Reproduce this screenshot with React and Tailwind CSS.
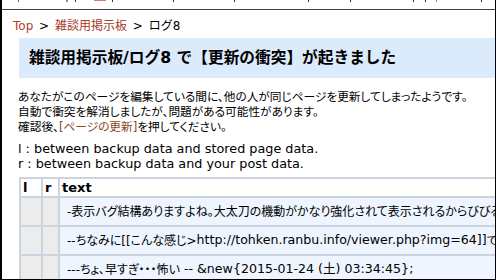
import React from 'react';

function TopMarks() {
  return (
    <div className="h-[10px] border-b border-[#404040] flex items-start overflow-hidden">
      <span className="ml-[16px] w-px h-[2px] bg-[#3a6ea5]" />
      <span className="ml-[47px] w-[2px] h-[2px] bg-[#5b9bd5]" />
      <span className="ml-[7px] w-px h-[2px] bg-[#333]" />
      <span className="ml-[18px] w-[12px] h-px bg-[#d08070]" />
      <span className="ml-[6px] w-px h-[2px] bg-[#333]" />
      <span className="ml-[60px] w-px h-[2px] bg-[#333]" />
      <span className="ml-[60px] w-px h-[2px] bg-[#333]" />
      <span className="ml-[73px] w-px h-[2px] bg-[#333]" />
      <span className="ml-[41px] w-px h-[2px] bg-[#333]" />
      <span className="ml-[62px] w-px h-[2px] bg-[#333]" />
      <span className="ml-[11px] w-px h-[2px] bg-[#333]" />
      <span className="ml-[10px] w-px h-[2px] bg-[#5b9bd5]" />
      <span className="ml-[44px] w-px h-[2px] bg-[#333]" />
    </div>
  );
}

function Row({ children }) {
  return (
    <>
      <div className="h-[27px] bg-[#ececec]" />
      <div className="h-[27px] bg-[#ececec]" />
      <div className="h-[27px] bg-[#eef5ff] pl-[7px] flex items-center text-[12px] whitespace-nowrap [font-feature-settings:'palt']">
        {children}
      </div>
    </>
  );
}

export default function App() {
  return (
    <div
      className="w-[496px] h-[280px] overflow-hidden bg-white border-l-2 border-r border-b border-black text-black"
      style={{ fontFamily: '"DejaVu Sans", "Noto Sans CJK JP", sans-serif' }}
    >
      <TopMarks />

      <div className="pl-[11px] pt-[9px] text-[12px] leading-[15px] whitespace-nowrap">
        <span className="text-[#b5402e]">Top</span>
        <span className="mx-[2px]"> &gt; </span>
        <span className="text-[#a8382a]">雑談用掲示板</span>
        <span className="mx-[2px]"> &gt; </span>
        <span>ログ8</span>
      </div>

      <div className="ml-[17px] mt-[4px] h-[40px] bg-[#dcebfb] flex items-center pl-[10px] text-[15.7px] font-bold whitespace-nowrap">
        雑談用掲示板/ログ8 で【更新の衝突】が起きました
      </div>

      <div className="ml-[16px] mt-[12px] text-[11.7px] leading-[15px] whitespace-nowrap [font-feature-settings:'palt']">
        <p>あなたがこのページを編集している間に、他の人が同じページを更新してしまったようです。</p>
        <p>自動で衝突を解消しましたが、問題がある可能性があります。</p>
        <p>
          確認後、<span className="text-[#8a4a1a]">[ページの更新]</span>を押してください。
        </p>
      </div>

      <div className="ml-[16px] mt-[6px] text-[12.8px] leading-[15px] whitespace-nowrap">
        <p>l : between backup data and stored page data.</p>
        <p>r : between backup data and your post data.</p>
      </div>

      <div className="ml-[17px] mt-[6px] w-max grid grid-cols-[20px_15px_860px] gap-[2px] p-[2px] bg-[#cbd4df]">
        <div className="h-[17px] bg-white pl-[2px] text-[13px] font-bold leading-[17px]">l</div>
        <div className="h-[17px] bg-white pl-[2px] text-[13px] font-bold leading-[17px]">r</div>
        <div className="h-[17px] bg-white pl-[2px] text-[13px] font-bold leading-[17px]">text</div>
        <Row>
          -表示バグ結構ありますよね。大太刀の機動がかなり強化されて表示されるからびびる。
          <span className="text-[12.6px]"> -- &amp;new{'{'}2015-01-24 (土) 03:20:11{'}'};</span>
        </Row>
        <Row>
          --ちなみに[[こんな感じ&gt;
          <span className="text-[12.6px]">http://tohken.ranbu.info/viewer.php?img=64]]</span>
          です。
        </Row>
        <Row>
          ---ちょ、早すぎ・・・怖い
          <span className="text-[12.6px] whitespace-pre"> -- &amp;new{'{'}2015-01-24 (土) 03:34:45{'}'};</span>
        </Row>
      </div>
    </div>
  );
}
